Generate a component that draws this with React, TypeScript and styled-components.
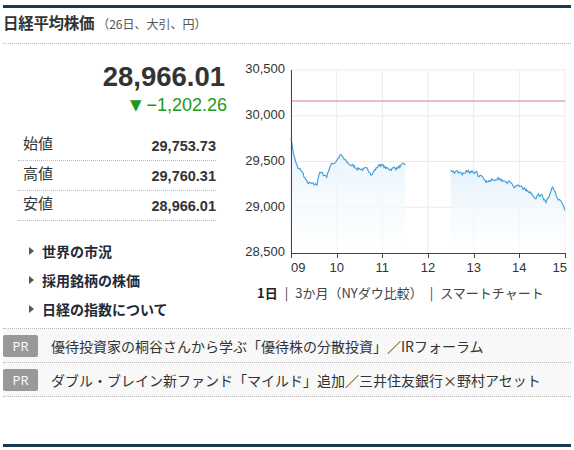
import React from "react";
import styled, { createGlobalStyle } from "styled-components";

const NAVY = "#17384f";
const JP = `"Noto Sans CJK JP", "Noto Sans", sans-serif`;
const NUM = `"Liberation Sans", Arial, sans-serif`;

const GlobalStyle = createGlobalStyle`
  html, body { margin:0; padding:0; background:#fff; }
  body { font-family:${JP}; color:#333; }
`;

// ---- chart data (page coords minus chart origin 230,55) ----
const X0 = 61;
const X1 = 335;
const xOf = (min: number) => X0 + (min * (X1 - X0)) / 360;
const yOf = (v: number) => 197 - (v - 28500) * 0.0915;

// [minutes since 9:00, value]
const morningKeys: [number, number][] = [
  [0, 29753], [4, 29560], [9, 29418], [14, 29396], [21, 29268], [30, 29240],
  [34, 29254], [37, 29378], [47, 29341], [51, 29451], [59, 29505], [65, 29571],
  [73, 29487], [86, 29432], [104, 29396], [106, 29365], [117, 29473],
  [126, 29418], [139, 29432], [150, 29462],
];
const afternoonKeys: [number, number][] = [
  [210, 29407], [222, 29363], [233, 29407], [244, 29363], [257, 29287],
  [270, 29323], [283, 29287], [296, 29214], [304, 29214], [322, 29104],
  [329, 29145], [335, 29050], [344, 29214], [348, 29145], [355, 29050],
  [360, 28966],
];

function rng(seed: number) {
  let s = seed;
  return () => {
    s = (s * 16807) % 2147483647;
    return (s - 1) / 2147483646;
  };
}

function buildSeries(keys: [number, number][], seed: number) {
  const rand = rng(seed);
  const pts: [number, number][] = [];
  let noise = 0;
  for (let i = 0; i < keys.length - 1; i++) {
    const [t0, v0] = keys[i];
    const [t1, v1] = keys[i + 1];
    for (let t = t0; t < t1; t++) {
      const k = (t - t0) / (t1 - t0);
      noise = noise * 0.55 + (rand() - 0.5) * 34;
      const n = t === keys[0][0] ? 0 : noise;
      pts.push([xOf(t), yOf(v0 + (v1 - v0) * k + n)]);
    }
  }
  const last = keys[keys.length - 1];
  pts.push([xOf(last[0]), yOf(last[1])]);
  return pts;
}

const morning = buildSeries(morningKeys, 7);
const afternoon = buildSeries(afternoonKeys, 19);

const toLine = (pts: [number, number][]) =>
  pts.map(([x, y], i) => `${i ? "L" : "M"}${x.toFixed(1)},${y.toFixed(1)}`).join(" ");
const toArea = (pts: [number, number][]) =>
  `${toLine(pts)} L${pts[pts.length - 1][0].toFixed(1)},197 L${pts[0][0].toFixed(1)},197 Z`;

const yTicks = [30500, 30000, 29500, 29000, 28500];
const xTicks = ["09", "10", "11", "12", "13", "14", "15"];

function Chart() {
  return (
    <ChartSvg width={344} height={227} viewBox="0 0 344 227">
      <defs>
        <linearGradient id="fill" x1="0" y1="0" x2="0" y2="1">
          <stop offset="0" stopColor="#e4f2fb" stopOpacity="0.95" />
          <stop offset="1" stopColor="#ffffff" stopOpacity="0.6" />
        </linearGradient>
      </defs>
      {yTicks.slice(0, 4).map((v) => (
        <line key={v} x1={X0} x2={X1} y1={yOf(v)} y2={yOf(v)} stroke="#ebebf0" />
      ))}
      {xTicks.map((_, i) => {
        const x = xOf(i * 60);
        return <line key={i} x1={x} x2={x} y1={14} y2={197} stroke="#ebebf0" />;
      })}
      <path d={toArea(morning)} fill="url(#fill)" />
      <path d={toArea(afternoon)} fill="url(#fill)" />
      <line x1={X0} x2={X1} y1={45} y2={45} stroke="#e9a6b6" strokeWidth={1.5} />
      <path d={toLine(morning)} fill="none" stroke="#3c9bd8" strokeWidth={1.1} />
      <path d={toLine(afternoon)} fill="none" stroke="#3c9bd8" strokeWidth={1.1} />
      <line x1={X0 + 0.5} x2={X0 + 0.5} y1={14} y2={197} stroke="#444" />
      <line x1={X0} x2={X1 + 0.5} y1={197.5} y2={197.5} stroke="#444" />
      {xTicks.map((_, i) => {
        const x = Math.round(xOf(i * 60)) + 0.5;
        return <line key={i} x1={x} x2={x} y1={197} y2={202} stroke="#444" />;
      })}
      {yTicks.map((v) => (
        <AxisText key={v} x={55} y={yOf(v)} textAnchor="end" dominantBaseline="middle">
          {v.toLocaleString("en-US")}
        </AxisText>
      ))}
      {xTicks.map((t, i) => (
        <AxisText
          key={t}
          x={i === 0 ? X0 : i === 6 ? X1 + 2 : xOf(i * 60)}
          y={213}
          textAnchor={i === 0 ? "start" : i === 6 ? "end" : "middle"}
          dominantBaseline="middle"
        >
          {t}
        </AxisText>
      ))}
    </ChartSvg>
  );
}

const quotes = [
  { label: "始値", value: "29,753.73" },
  { label: "高値", value: "29,760.31" },
  { label: "安値", value: "28,966.01" },
];

const links = ["世界の市況", "採用銘柄の株価", "日経の指数について"];

const prs = [
  "優待投資家の桐谷さんから学ぶ「優待株の分散投資」／IRフォーラム",
  "ダブル・ブレイン新ファンド「マイルド」追加／三井住友銀行×野村アセット",
];

export default function App() {
  return (
    <>
      <GlobalStyle />
      <Wrapper>
        <Header>
          <Title>日経平均株価</Title>
          <Sub>（26日、大引、円）</Sub>
        </Header>
        <Body>
          <LeftCol>
            <Price>28,966.01</Price>
            <Change>
              <Arrow>▼</Arrow>−1,202.26
            </Change>
            <Quotes>
              {quotes.map((q) => (
                <QuoteRow key={q.label}>
                  <QuoteLabel>{q.label}</QuoteLabel>
                  <QuoteValue>{q.value}</QuoteValue>
                </QuoteRow>
              ))}
            </Quotes>
            <Links>
              {links.map((l) => (
                <LinkItem key={l}>
                  <Caret />
                  {l}
                </LinkItem>
              ))}
            </Links>
          </LeftCol>
          <RightCol>
            <Chart />
            <Tabs>
              <Tab $active>1日</Tab>
              <Sep>|</Sep>
              <Tab>3か月（NYダウ比較）</Tab>
              <Sep>|</Sep>
              <Tab>スマートチャート</Tab>
            </Tabs>
          </RightCol>
        </Body>
        <PrList>
          {prs.map((p) => (
            <PrRow key={p}>
              <PrBadge>PR</PrBadge>
              <PrText>{p}</PrText>
            </PrRow>
          ))}
        </PrList>
        <BottomBar />
      </Wrapper>
    </>
  );
}

const Wrapper = styled.div`
  margin:0 3px; padding-top:5px;
  &::before { content:""; display:block; height:3px; background:${NAVY}; }
`;

const Header = styled.div`
  display:flex; align-items:baseline;
  padding:5px 0 10px;
  line-height:19px;
  border-bottom:1px dotted #bbb;
`;

const Title = styled.h1`
  margin:0; font-size:15.5px; font-weight:700; color:#333; letter-spacing:-0.3px;
`;

const Sub = styled.span`
  margin-left:3px; font-size:12px; color:#555;
`;

const Body = styled.div`
  display:flex;
`;

const LeftCol = styled.div`
  width:227px; flex:none;
  display:flex; flex-direction:column;
`;

const Price = styled.div`
  margin-top:18px; padding-right:5px;
  text-align:right;
  font-family:${NUM}; font-size:27.5px; font-weight:700; line-height:30px; color:#333;
`;

const Change = styled.div`
  margin-top:3px; padding-right:3px;
  display:flex; justify-content:flex-end; align-items:center;
  font-family:${NUM}; font-size:18px; line-height:20px; color:#1c9a1c;
`;

const Arrow = styled.span`
  margin-right:5px; font-family:"DejaVu Sans", sans-serif; font-size:15px;
`;

const Quotes = styled.div`
  margin:16px 0 0 15px; width:198px;
`;

const QuoteRow = styled.div`
  display:flex; justify-content:space-between; align-items:center;
  height:29px;
  border-bottom:1px dotted #bbb;
`;

const QuoteLabel = styled.span`
  padding:0 0 6px 5px;
  font-size:15px; line-height:20px; color:#333;
`;

const QuoteValue = styled.span`
  font-family:${NUM}; font-size:14.5px; font-weight:700; line-height:20px; color:#333;
`;

const Links = styled.ul`
  list-style:none; margin:15px 0 0; padding:0 0 0 26px;
`;

const LinkItem = styled.li`
  display:flex; align-items:center;
  height:29px;
  font-size:14px; font-weight:700; color:#1f2a38;
`;

const Caret = styled.span`
  width:0; height:0; margin-right:8px;
  border-left:5px solid #555;
  border-top:4px solid transparent;
  border-bottom:4px solid transparent;
`;

const RightCol = styled.div`
  flex:1; min-width:0;
  display:flex; flex-direction:column;
  padding-top:12px;
`;

const ChartSvg = styled.svg`
  display:block;
`;

const AxisText = styled.text`
  font-family:${NUM}; font-size:13px; fill:#333;
`;

const Tabs = styled.div`
  display:flex; align-items:center;
  padding-left:27px;
  font-size:13px; line-height:20px;
`;

const Tab = styled.span<{ $active?: boolean }>`
  color:${({ $active }) => ($active ? "#222" : "#444")};
  font-weight:${({ $active }) => ($active ? 700 : 400)};
`;

const Sep = styled.span`
  margin:0 7px; color:#444;
`;

const PrList = styled.div`
  margin-top:5px;
  border-top:1px dotted #bbb;
`;

const PrRow = styled.div`
  display:flex; align-items:center;
  height:33px;
  background:#f8f8f8;
  border-bottom:1px dotted #bbb;
`;

const PrBadge = styled.span`
  width:35px; height:22px; flex:none;
  display:flex; align-items:center; justify-content:center;
  border-radius:2px;
  background:#999; color:#fff;
  font-family:"Open Sans", ${NUM}; font-size:13px;
`;

const PrText = styled.span`
  margin-left:13px;
  font-size:14px; line-height:20px; color:#333;
  white-space:nowrap;
`;

const BottomBar = styled.div`
  margin-top:47px; height:3px; background:${NAVY};
`;
